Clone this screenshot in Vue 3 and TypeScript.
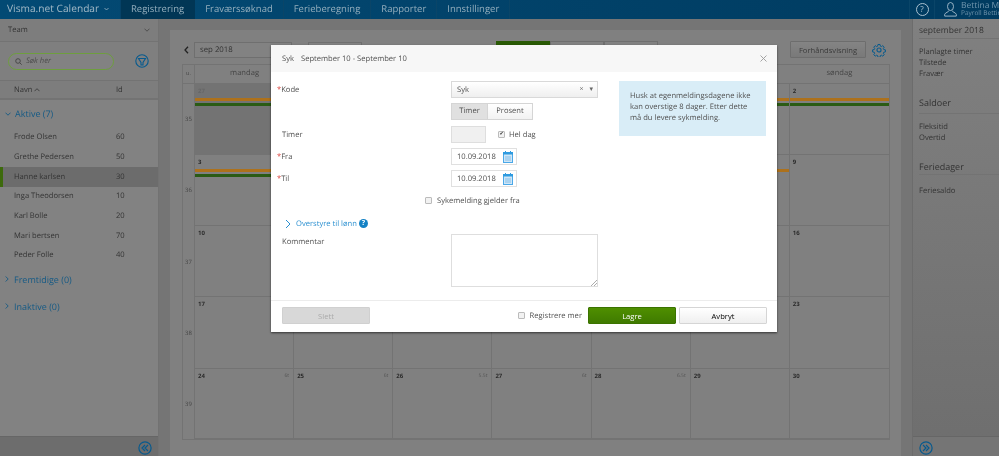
<script setup lang="ts">
const nav = [
  { label: 'Registrering', active: true },
  { label: 'Fraværssøknad', active: false },
  { label: 'Ferieberegning', active: false },
  { label: 'Rapporter', active: false },
  { label: 'Innstillinger', active: false },
]
const people = [
  { name: 'Frode Olsen', id: 60, sel: false },
  { name: 'Grethe Pedersen', id: 50, sel: false },
  { name: 'Hanne karlsen', id: 30, sel: true },
  { name: 'Inga Theodorsen', id: 10, sel: false },
  { name: 'Karl Bolle', id: 20, sel: false },
  { name: 'Mari bertsen', id: 70, sel: false },
  { name: 'Peder Folle', id: 40, sel: false },
]
const days = ['mandag', 'tirsdag', 'onsdag', 'torsdag', 'fredag', 'lørdag', 'søndag']
type Cell = { n: number; h?: string; other?: boolean; orange?: boolean; green?: boolean }
const weeks: { w: number; cells: Cell[] }[] = [
  { w: 35, cells: [27, 28, 29, 30, 31, 1, 2].map((n, i) => ({ n, other: i < 5, orange: true, green: true })) },
  { w: 36, cells: [3, 4, 5, 6, 7, 8, 9].map((n, i) => ({ n, orange: i < 6, green: i < 5 })) },
  { w: 37, cells: [10, 11, 12, 13, 14, 15, 16].map((n) => ({ n })) },
  { w: 38, cells: [17, 18, 19, 20, 21, 22, 23].map((n) => ({ n })) },
  { w: 39, cells: [
    { n: 24, h: '6t' }, { n: 25, h: '6t' }, { n: 26, h: '5.5t' }, { n: 27, h: '6t' }, { n: 28, h: '6.5t' }, { n: 29 }, { n: 30 },
  ] },
]
</script>

<template>
  <div class="page">
    <header class="top">
      <div class="brand">Visma.net Calendar
        <svg class="caret" width="5" height="4" viewBox="0 0 5 4" fill="none" stroke="#9fb6c5" stroke-width=".8"><path d="M.5 1l2 2 2-2"/></svg>
      </div>
      <nav class="nav">
        <a v-for="n in nav" :key="n.label" :class="{ on: n.active }">{{ n.label }}</a>
      </nav>
      <div class="top-right">
        <div class="help"><span class="qm">?</span></div>
        <div class="user">
          <svg width="13" height="15" viewBox="0 0 13 15" fill="none" stroke="#a9c0cf" stroke-width=".9"><ellipse cx="6.500" cy="4.500" rx="3" ry="4"/><path d="M5 8.500c0 1.500-3.800 2-4.300 3.800v1.800h11.600v-1.800C11.800 10.500 8 10 8 8.500"/></svg>
          <div class="u-text"><div class="u1">Bettina Madsen</div><div class="u2">Payroll Bettina</div></div>
        </div>
      </div>
    </header>

    <div class="body">
      <aside class="left">
        <div class="team"><span>Team</span>
          <svg width="6" height="4" viewBox="0 0 6 4" fill="none" stroke="#444" stroke-width=".8"><path d="M.5 .7L3 3.200 5.500 .7"/></svg>
        </div>
        <div class="search-row">
          <div class="search">
            <svg width="7" height="7" viewBox="0 0 7 7" fill="none" stroke="#444" stroke-width=".9"><circle cx="3" cy="3" r="2.300"/><path d="M4.700 4.700l2 2"/></svg>
            <em>Søk her</em>
          </div>
          <svg width="14" height="14" viewBox="0 0 14 14" fill="none" stroke="#075a8e" stroke-width="1.100"><circle cx="7" cy="7" r="6.200"/><path d="M3.500 4.500h7L8 8.500v2.500H6V8.500z"/></svg>
        </div>
        <div class="thead">
          <span class="th-n">Navn
            <svg width="6" height="4" viewBox="0 0 6 4" fill="none" stroke="#333" stroke-width=".8"><path d="M.5 3.200L3 .7l2.500 2.500"/></svg>
          </span><span>Id</span>
        </div>
        <div class="group open">
          <svg width="6" height="4" viewBox="0 0 6 4" fill="none" stroke="#155a85" stroke-width=".9"><path d="M.5 .7L3 3.200 5.500 .7"/></svg>
          Aktive (7)
        </div>
        <div v-for="p in people" :key="p.id" class="person" :class="{ sel: p.sel }">
          <span class="p-n">{{ p.name }}</span><span>{{ p.id }}</span>
        </div>
        <div class="group g2">
          <svg width="4" height="6" viewBox="0 0 4 6" fill="none" stroke="#155a85" stroke-width=".9"><path d="M.7 .5L3.200 3 .7 5.500"/></svg>
          Fremtidige (0)
        </div>
        <div class="group g3">
          <svg width="4" height="6" viewBox="0 0 4 6" fill="none" stroke="#155a85" stroke-width=".9"><path d="M.7 .5L3.200 3 .7 5.500"/></svg>
          Inaktive (0)
        </div>
        <div class="left-foot">
          <svg width="14" height="14" viewBox="0 0 14 14" fill="none" stroke="#075a8e" stroke-width="1.200"><circle cx="7" cy="7" r="6.100"/><path d="M7 4L4 7l3 3M10 4L7 7l3 3"/></svg>
        </div>
      </aside>

      <main class="center">
        <div class="card">
          <div class="tools">
            <svg class="arrow" width="5" height="8" viewBox="0 0 5 8" fill="none" stroke="#222" stroke-width="1.300"><path d="M4 .7L1 4l3 3.300"/></svg>
            <div class="month">sep 2018</div>
            <div class="today"></div>
            <div class="tabs"><span class="t on"></span><span class="t"></span><span class="t"></span></div>
            <div class="tl-right">
              <button class="preview">Forhåndsvisning</button>
              <svg width="14" height="14" viewBox="0 0 24 24" fill="none" stroke="#075a8e" stroke-width="1.900" stroke-linejoin="round"><circle cx="12" cy="12" r="3.500"/><path d="M10 1.500h4l.6 3.200 1.900.8 2.700-1.800 2.800 2.800-1.800 2.700.8 1.900 3.200.6v4l-3.200.6-.8 1.900 1.800 2.700-2.800 2.800-2.700-1.800-1.900.8-.6 3.200h-4l-.6-3.200-1.900-.8-2.700 1.800-2.800-2.800 1.800-2.700-.8-1.900-3.200-.6v-4l3.200-.6.800-1.900-1.800-2.700 2.800-2.800 2.700 1.800 1.900-.8z" transform="translate(1.200 1.200) scale(.9)"/></svg>
            </div>
          </div>
          <div class="cal">
            <div class="ch wk">u.</div>
            <div v-for="d in days" :key="d" class="ch">{{ d }}</div>
            <template v-for="w in weeks" :key="w.w">
              <div class="wk-n">{{ w.w }}</div>
              <div v-for="c in w.cells" :key="c.n" class="cell" :class="{ other: c.other }">
                <div class="c-top"><span>{{ c.n }}</span><span v-if="c.h" class="hrs">{{ c.h }}</span></div>
                <div v-if="c.orange" class="bar o"></div>
                <div v-if="c.green" class="bar g"></div>
              </div>
            </template>
          </div>
        </div>
      </main>

      <aside class="right">
        <h4 class="r-title">september 2018</h4>
        <div class="r-list"><div>Planlagte timer</div><div>Tilstede</div><div>Fravær</div></div>
        <h4 class="r-h">Saldoer</h4>
        <div class="r-list"><div>Fleksitid</div><div>Overtid</div></div>
        <h4 class="r-h r-h2">Feriedager</h4>
        <div class="r-list r-l3"><div>Feriesaldo</div></div>
        <div class="right-foot">
          <svg width="14" height="14" viewBox="0 0 14 14" fill="none" stroke="#075a8e" stroke-width="1.200"><circle cx="7" cy="7" r="6.100"/><path d="M4 4l3 3-3 3M7 4l3 3-3 3"/></svg>
        </div>
      </aside>
    </div>

    <section class="modal">
      <div class="m-head">
        <span>Syk</span><span class="m-date">September 10 - September 10</span>
        <svg class="close" width="7" height="7" viewBox="0 0 7 7" stroke="#9a9a9a" stroke-width=".9"><path d="M.5 .5l6 6M6.500 .5l-6 6"/></svg>
      </div>
      <div class="m-body">
        <div class="form">
          <div class="row">
            <label><i>*</i>Kode</label>
            <div class="select"><span>Syk</span><span class="sel-ic"><b>×</b><b class="dn">▾</b></span></div>
          </div>
          <div class="row r-seg">
            <label></label>
            <div class="seg"><span class="s on">Timer</span><span class="s">Prosent</span></div>
          </div>
          <div class="row r-tim">
            <label class="pad">Timer</label>
            <div class="tim-box"></div>
            <span class="check on">✔</span><span class="c-label hd">Hel dag</span>
          </div>
          <div class="row r-date">
            <label><i>*</i>Fra</label>
            <div class="date"><span>10.09.2018</span>
              <svg width="10" height="12" viewBox="0 0 10 12"><rect x=".5" y="1.500" width="9" height="10" fill="#cfe6f7" stroke="#4aa8e8"/><rect x="0" y="1" width="10" height="2.500" fill="#2f9be0"/><path d="M2.500 0v2.500M7.500 0v2.500" stroke="#2f9be0"/><rect x="2" y="5" width="6" height="5" fill="#a8d2f0"/></svg>
            </div>
          </div>
          <div class="row r-date">
            <label><i>*</i>Til</label>
            <div class="date"><span>10.09.2018</span>
              <svg width="10" height="12" viewBox="0 0 10 12"><rect x=".5" y="1.500" width="9" height="10" fill="#cfe6f7" stroke="#4aa8e8"/><rect x="0" y="1" width="10" height="2.500" fill="#2f9be0"/><path d="M2.500 0v2.500M7.500 0v2.500" stroke="#2f9be0"/><rect x="2" y="5" width="6" height="5" fill="#a8d2f0"/></svg>
            </div>
          </div>
          <div class="row r-syk">
            <span class="check"></span><span class="c-label">Sykemelding gjelder fra</span>
          </div>
          <div class="row r-over">
            <svg width="6" height="10" viewBox="0 0 6 10" fill="none" stroke="#2a8fd0" stroke-width="1"><path d="M1 1l4 4-4 4"/></svg>
            <span class="link">Overstyre til lønn</span><span class="qb">?</span>
          </div>
          <div class="row r-kom">
            <label class="pad kl">Kommentar</label>
            <div class="ta"><svg width="6" height="6" viewBox="0 0 6 6" stroke="#888" stroke-width=".7"><path d="M0 6l6-6M3 6l3-3"/></svg></div>
          </div>
        </div>
        <div class="info">Husk at egenmeldingsdagene ikke kan overstige 8 dager. Etter dette må du levere sykmelding.</div>
      </div>
      <div class="m-foot">
        <button class="b del">Slett</button>
        <div class="foot-r">
          <span class="check"></span><span class="c-label mer">Registrere mer</span>
          <button class="b save">Lagre</button>
          <button class="b cancel">Avbryt</button>
        </div>
      </div>
    </section>
  </div>
</template>

<style>
html, body { margin: 0; overflow: hidden; }
</style>

<style scoped>
.page {
  position: relative; width: 999px; height: 456px; overflow: hidden;
  display: flex; flex-direction: column;
  background: #757575; color: #333;
  font-family: "Open Sans", "Noto Sans", sans-serif; font-size: 7.600px;
  text-rendering: geometricPrecision;
  filter: blur(.3px);
}
.top { height: 19px; flex: none; display: flex; background: linear-gradient(90deg, #034a74, #003b60); line-height: 17px; }
.brand { width: 121px; padding-left: 7px; box-sizing: border-box; font-size: 10.200px; white-space: nowrap; color: #a2b9c7; border-right: 1px solid #064268; }
.caret { margin-left: 2px; vertical-align: 1px; }
.nav { display: flex; }
.nav a { font-size: 9.500px; padding: 0 10px; color: #94aebd; border-right: 1px solid #0a4568; white-space: nowrap; }
.nav a.on { background: #013655; border-right: 0; padding-right: 11px; }
.top-right { margin-left: auto; display: flex; width: 90px; }
.help { width: 26px; flex: none; box-sizing: border-box; border-left: 1px solid #0a4568; border-right: 1px solid #0a4568; display: flex; align-items: center; justify-content: center; }
.qm { width: 11px; height: 11px; border: 1px solid #a9c0cf; border-radius: 50%; font-size: 8px; line-height: 11px; text-align: center; color: #a9c0cf; }
.user { display: flex; padding-left: 9px; gap: 4px; align-items: center; overflow: hidden; white-space: nowrap; }
.user svg, .u-text { flex: none; }
.u-text { line-height: 7.500px; margin-top: -1px; }
.u1 { font-size: 8.500px; color: #6f95ad; }
.u2 { font-size: 6.500px; color: #6f95ad; }

.body { flex: 1; display: flex; min-height: 0; }
.left { width: 158px; flex: none; background: #828282; border-right: 1px solid #727272; display: flex; flex-direction: column; position: relative; }
.team { height: 23px; box-sizing: border-box; flex: none; padding: 0 8px; display: flex; align-items: center; justify-content: space-between; background: #7d7d7d; border-bottom: 1px solid #737373; }
.search-row { height: 38px; flex: none; display: flex; align-items: center; padding: 0 9px 0 8px; justify-content: space-between; background: #7f7f7f; box-sizing: border-box; }
.search { width: 106px; height: 17px; box-sizing: border-box; border: 1px solid #6e9e3e; border-radius: 9px; background: #828282; display: flex; align-items: center; gap: 4px; padding-left: 6px; }
.search em { color: #4c4c4c; font-size: 7.600px; }
.thead { height: 20px; box-sizing: border-box; flex: none; display: flex; align-items: center; padding: 1px 0 0 14px; background: #7d7d7d; border-top: 1px solid #737373; border-bottom: 2px solid #737373; }
.th-n { width: 102px; display: flex; align-items: center; gap: 2px; }
.group { color: #155a85; font-size: 9px; padding-left: 5px; display: flex; align-items: center; gap: 4px; }
.group.open { height: 27.500px; flex: none; }
.group.g2 { height: 20px; margin-top: 4px; flex: none; gap: 5px; }
.group.g3 { height: 20px; margin-top: 7px; flex: none; gap: 5px; }
.person { height: 19.700px; flex: none; padding-left: 14px; display: flex; align-items: center; box-sizing: border-box; }
.p-n { width: 102px; }
.person.sel { background: #6c6c6c; border-left: 3px solid #3d6a0c; padding-left: 11px; }
.left-foot, .right-foot { position: absolute; bottom: 0; left: 0; right: 0; height: 20px; box-sizing: border-box; padding-top: 3px; background: #6d6d6d; border-top: 1px solid #666; display: flex; align-items: center; }
.left-foot { justify-content: flex-end; padding-right: 6px; }
.right-foot { padding-left: 6px; background: #757575; }

.center { flex: 1; min-width: 0; padding: 11px 11px 0; }
.card { height: 100%; background: #808080; padding: 11px 11px 0 12px; box-sizing: border-box; }
.tools { height: 17px; display: flex; align-items: center; position: relative; margin-bottom: 6px; }
.arrow { margin: 0 5px 0 2px; }
.month { width: 98px; height: 16px; box-sizing: border-box; border: 1px solid #6f6f6f; background: #828282; font-size: 7.800px; line-height: 14px; padding-left: 5px; }
.today { width: 54px; height: 16px; box-sizing: border-box; margin-left: 16px; border: 1px solid #6f6f6f; background: #828282; }
.tabs { display: flex; position: absolute; left: 314px; top: 0; }
.t { width: 54px; height: 16px; border: 1px solid #6f6f6f; background: #828282; box-sizing: border-box; }
.t.on { background: #2a5a05; border-color: #2a5a05; }
.tl-right { display: flex; align-items: center; gap: 6px; margin-left: auto; margin-right: 4px; }
.preview { width: 76px; height: 17px; padding: 0; border: 1px solid #6d6d6d; border-radius: 1px; background: linear-gradient(#848484, #797979); font: inherit; color: #3a3a3a; }
.cal { display: grid; grid-template-columns: 12px repeat(7, 1fr); grid-template-rows: 18.500px repeat(4, 71.300px) 1fr; border: 1px solid #737373; width: 708px; box-sizing: border-box; height: 376px; }
.ch { text-align: center; color: #444; line-height: 17px; border-bottom: 1px solid #737373; }
.ch.wk { font-size: 5.500px; border-right: 1px solid #737373; }
.wk-n { font-size: 6px; color: #444; display: flex; align-items: center; justify-content: center; border-right: 1px solid #737373; }
.cell { border-right: 1px solid #737373; border-bottom: 1px solid #737373; box-sizing: border-box; }
.cell:nth-child(8n) { border-right: 0; }
.cell.other { background: #737373; }
.c-top { display: flex; justify-content: space-between; padding: 3px 4px 0 3px; font-size: 6px; line-height: 8px; height: 14px; box-sizing: border-box; font-weight: 700; color: #2b2b2b; }
.other .c-top { color: #666; }
.hrs { font-weight: 400; font-size: 5px; color: #555; }
.bar { height: 3px; }
.bar.o { background: #ad711b; }
.bar.g { background: #2a5b14; margin-top: 2px; }

.right { width: 87px; flex: none; background: linear-gradient(#808080, #6e6e6e); border-left: 1px solid #6c6c6c; box-sizing: border-box; padding-left: 6px; position: relative; white-space: nowrap; overflow: hidden; color: #333; }
.r-title { margin: 0; font-weight: 400; font-size: 8.500px; height: 20px; box-sizing: border-box; line-height: 24px; border-bottom: 1px solid #737373; }
.r-h { margin: 16px 0 0; font-weight: 400; font-size: 9px; height: 18px; box-sizing: border-box; line-height: 13px; border-bottom: 1px solid #737373; }
.r-h2 { height: 15px; }
.r-list { padding-top: 8px; line-height: 11px; }
.r-l3 { padding-top: 11px; }

.modal { position: absolute; left: 271px; top: 45px; width: 506px; height: 287px; background: #fff; box-shadow: 0 1px 2px rgba(0, 0, 0, .6); display: flex; flex-direction: column; color: #505050; }
.m-head { height: 27px; flex: none; background: #f7f7f7; display: flex; align-items: center; padding-left: 11px; gap: 7px; position: relative; }
.close { position: absolute; right: 10px; top: 10px; }
.m-body { flex: 1; display: flex; padding: 9px 11px 0 6px; justify-content: space-between; min-height: 0; }
.form { width: 326px; }
.row { display: flex; align-items: center; }
.row label { width: 174px; flex: none; }
.row label i { color: #d9362f; font-style: normal; }
.row label.pad { padding-left: 5px; box-sizing: border-box; }
.select { width: 147px; height: 17px; box-sizing: border-box; border: 1px solid #d9d9d9; background: linear-gradient(#fff, #efefef); display: flex; align-items: center; justify-content: space-between; padding: 0 4px 0 5px; }
.sel-ic { display: flex; gap: 6px; color: #666; font-size: 7px; }
.sel-ic b { font-weight: 400; }
.r-seg { margin-top: 5px; }
.seg { display: flex; }
.s { height: 17px; box-sizing: border-box; line-height: 15px; text-align: center; width: 37px; border: 1px solid #d5d5d5; background: linear-gradient(#fff, #f2f2f2); }
.s.on { background: #e0e0e0; }
.s + .s { border-left: 0; width: 45px; }
.r-tim { margin-top: 6px; }
.tim-box { width: 35px; height: 17px; box-sizing: border-box; background: #f0f0f0; border: 1px solid #dedede; margin-right: 12px; }
.check { width: 7px; height: 7px; box-sizing: border-box; border: 1px solid #bbb; border-radius: 1px; background: #f2f2f2; flex: none; font-size: 5px; line-height: 5px; text-align: center; color: #333; }
.c-label { margin-left: 5px; white-space: nowrap; }
.c-label.hd { margin-left: 4px; }
.r-date { margin-top: 5px; }
.date { width: 66px; height: 17px; box-sizing: border-box; border: 1px solid #e0e0e0; display: flex; align-items: center; justify-content: space-between; padding: 0 3px 0 5px; }
.r-syk { margin-top: 8px; height: 11px; padding-left: 148px; }
.r-over { margin-top: 12px; height: 11px; padding-left: 8px; }
.link { color: #2a8fd0; margin-left: 5px; }
.qb { width: 9px; height: 9px; border-radius: 50%; background: #1482c5; color: #fff; font-size: 7px; line-height: 9px; text-align: center; font-weight: 700; margin-left: 2px; }
.r-kom { margin-top: 5px; align-items: flex-start; }
.row label.kl { padding-top: 3px; }
.ta { width: 147px; height: 53px; box-sizing: border-box; border: 1px solid #dedede; position: relative; }
.ta svg { position: absolute; right: 0; bottom: 0; }
.info { width: 147px; height: 55px; box-sizing: border-box; background: #d9edf7; padding: 10px 8px 0 11px; line-height: 11px; }
.m-foot { height: 32px; flex: none; border-top: 1px solid #ececec; display: flex; align-items: center; justify-content: space-between; padding: 0 10px 2px 11px; box-sizing: border-box; }
.foot-r { display: flex; align-items: center; }
.mer { margin-right: 6px; }
.b { width: 88px; height: 17px; padding: 0; border-radius: 1px; font: inherit; box-sizing: border-box; }
.del { background: #d8d8d8; border: 1px solid #d0d0d0; color: #aaa; }
.save { background: linear-gradient(#4f8f00, #3f7a00); border: 1px solid #3b7300; color: #fff; margin-right: 3px; }
.cancel { background: linear-gradient(#fff, #efefef); border: 1px solid #d5d5d5; }
</style>
